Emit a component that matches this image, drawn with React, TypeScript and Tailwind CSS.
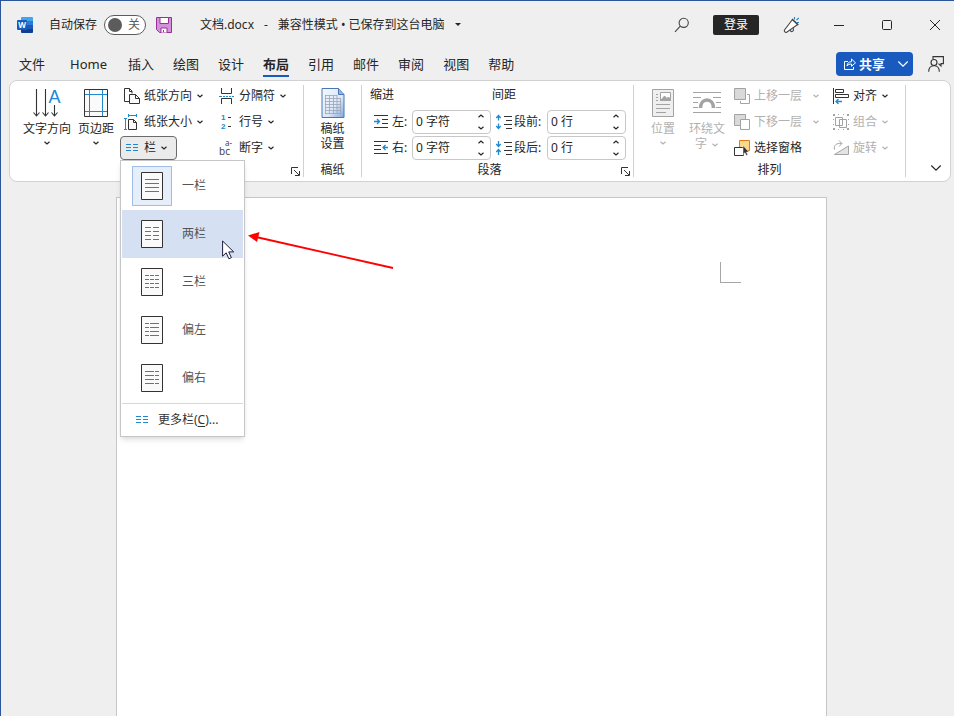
import React, { useState } from 'react';

interface IconProps {
  className?: string;
}

interface RibbonButtonProps {
  icon: React.ReactNode;
  label: string;
  disabled?: boolean;
  active?: boolean;
  arrow?: 'none' | 'near' | 'far';
}

interface SpinFieldProps {
  id: string;
  icon: React.ReactNode;
  label: string;
  labelClass: string;
  value: string;
}

const TABS = ['文件', 'Home', '插入', '绘图', '设计', '布局', '引用', '邮件', '审阅', '视图', '帮助'];

// text lines drawn inside each column preview
const COLUMN_PRESETS = [
  { name: '一栏', lines: 'M4 7.5h14M4 11.5h14M4 15.5h14M4 19.5h14' },
  { name: '两栏', lines: 'M4 7.5h6M12 7.5h6M4 11.5h6M12 11.5h6M4 15.5h6M12 15.5h6M4 19.5h6M12 19.5h6' },
  { name: '三栏', lines: 'M4 7.5h4M9 7.5h4M14 7.5h4M4 11.5h4M9 11.5h4M14 11.5h4M4 15.5h4M9 15.5h4M14 15.5h4M4 19.5h4M9 19.5h4M14 19.5h4' },
  { name: '偏左', lines: 'M4 7.5h4M9 7.5h9M4 11.5h4M9 11.5h9M4 15.5h4M9 15.5h9M4 19.5h4M9 19.5h9' },
  { name: '偏右', lines: 'M4 7.5h9M14 7.5h4M4 11.5h9M14 11.5h4M4 15.5h9M14 15.5h4M4 19.5h9M14 19.5h4' },
];

const ChevronSmall: React.FC<IconProps> = ({ className = '' }) => (
  <svg className={`h-2 w-2 shrink-0 ${className}`} viewBox="0 0 8 8" fill="none" stroke="currentColor" strokeWidth="1.2">
    <path d="M1.5 2.8L4 5l2.500-2.200" />
  </svg>
);

const ChevronWide: React.FC<IconProps> = ({ className = '' }) => (
  <svg className={`h-3 w-3 shrink-0 ${className}`} viewBox="0 0 12 12" fill="none" stroke="currentColor" strokeWidth="1.2">
    <path d="M1.300 3.5L6 8.200l4.700-4.700" />
  </svg>
);

const WordLogo = () => (
  <svg className="h-4 w-4" viewBox="0 0 16 16">
    <path d="M4 1a1 1 0 0 1 1-1h10a1 1 0 0 1 1 1v3.5H4z" fill="#41a5ee" />
    <path d="M4 4h12v4H4z" fill="#2b7cd3" />
    <path d="M4 8h12v4H4z" fill="#185abd" />
    <path d="M4 12h12v3a1 1 0 0 1-1 1H5a1 1 0 0 1-1-1z" fill="#103f91" />
    <rect y="3" width="10" height="10" rx="1" fill="#185abd" />
    <text x="5" y="11" textAnchor="middle" fontSize="8" fontWeight="700" fill="#fff">W</text>
  </svg>
);

const SaveIcon = () => (
  <svg className="h-4 w-4" viewBox="0 0 16 16" stroke="#98309c">
    <path d="M.5.5h15v15h-12l-3-3z" fill="#d490d8" />
    <path d="M4 .5h8.5v6H4zM5 15.5v-4.5h6v4.5" fill="#fff" />
    <path d="M7.5 13v2" />
  </svg>
);

const SearchIcon = () => (
  <svg className="h-4 w-4" viewBox="0 0 16 16" fill="none" stroke="#444" strokeWidth="1.1">
    <circle cx="10.7" cy="5.8" r="4.6" />
    <path d="M7.300 9.200L2 14.800" />
  </svg>
);

const PenIcon = () => (
  <svg className="h-4 w-4" viewBox="0 0 16 16" fill="none" stroke="#444" strokeWidth="1.1">
    <path d="M9.500 2.500L1.500 13c-.6 1.500.8 2.800 2.200 2.200L14.800 7.500z" fill="#fff" />
    <path d="M9 2l6.200 6M7.200 13.200c.3 1.600 2 1.800 2.800.8s.6-1.800.2-2.900" />
    <path d="M11.500 0v2.500M15.800.800L13.500 3.200M14 5.500h2" stroke="#1f86c9" />
  </svg>
);

const ShareIcon = () => (
  <svg className="h-3 w-3" viewBox="0 0 12 12" fill="none" stroke="#fff">
    <path d="M4 3.5H.5v8h9V9" />
    <path d="M3 8c.3-3 2-4.3 4.5-4.3V1l4 3.800-4 3.500V6C5.500 6 4 6.500 3 8z" />
  </svg>
);

const CommentsIcon = () => (
  <svg className="h-4 w-4" viewBox="0 0 16 16" fill="none" stroke="#333" strokeWidth="1.1">
    <path d="M5 3V.6h10.400v7H13V10l-2.500-2.400" />
    <circle cx="6" cy="6.5" r="3" />
    <path d="M.7 15.800c0-4 2.300-6 5.300-6s5.300 2 5.300 6" />
  </svg>
);

const TextDirectionIcon = () => (
  <svg className="h-[30px] w-7 overflow-visible" viewBox="0 0 28 30" fill="none" stroke="#333" strokeWidth="1.1">
    <path d="M3.500 1v27M.5 24.500l3 3.500 3-3.500M12.500 1v27M9.500 24.500l3 3.500 3-3.500M21.500 17v11M18.500 24.500l3 3.500 3-3.500" />
    <text x="21.5" y="15" textAnchor="middle" fontSize="18" fill="#2088cf" stroke="none" className="font-['Liberation_Sans']">
      A
    </text>
  </svg>
);

const MarginsIcon = () => (
  <svg className="h-[30px] w-6" viewBox="0 0 24 30" fill="none">
    <path d="M.5 1.500h23v27H.5z" fill="#fafafa" />
    <path d="M5.500 1.500v27M18.500 1.500v27M.5 6.500h23M.5 23.500h23" stroke="#2088cf" />
    <path d="M.5 1.500h23v27H.5z" stroke="#333" />
  </svg>
);

const OrientationIcon = () => (
  <svg className="h-4 w-4" viewBox="0 0 16 16" fill="none" stroke="#333">
    <path d="M5 13.500H.5V.5h5l2.500 2.500v2.500M5.500.5v3h2.500" />
    <path d="M5.500 6.500h6l4 4v5h-10z" fill="#fafafa" />
    <path d="M11.500 6.500v4h4" />
  </svg>
);

const PaperSizeIcon = () => (
  <svg className="h-4 w-4" viewBox="0 0 16 16" fill="none">
    <path d="M4.500 5.500h5l3 3v7h-8z" fill="#fafafa" stroke="#333" />
    <path d="M9.500 5.500v3h3" stroke="#333" />
    <path d="M4.500 1.500h8M4.500 0v3M12.500 0v3M1.500 4.500v11M0 4.500h3M0 15.500h3" stroke="#2088cf" />
  </svg>
);

const ColumnsIcon = () => (
  <svg className="h-4 w-4" viewBox="0 0 16 16" stroke="#2088cf">
    <path d="M2 4.500h5M9 4.500h5M2 7.500h5M9 7.500h5M2 10.500h5M9 10.500h5" />
  </svg>
);

const BreaksIcon = () => (
  <svg className="h-4 w-4" viewBox="0 0 16 16" fill="none" stroke="#333">
    <path d="M2.500 0v5.500h10V0M2.500 16v-5.500h10V16" />
    <path d="M0 8.500h3M4 8.500h2M7 8.500h2M10 8.500h2M13 8.500h2" stroke="#2088cf" />
  </svg>
);

const LineNumbersIcon = () => (
  <svg className="h-4 w-4 overflow-visible font-['Liberation_Sans']" viewBox="0 0 16 16" fontSize="8" fontWeight="700" fill="#2088cf">
    <text x="2" y="6">1</text>
    <text x="2" y="15">2</text>
    <path d="M9 3.500h3M9 12.500h3" stroke="#333" />
  </svg>
);

const HyphenIcon = () => (
  <svg className="h-4 w-4 overflow-visible" viewBox="0 0 16 16" fill="#444">
    <text x="0" y="15" fontSize="10">bc</text>
    <text x="6" y="6" fontSize="8">a-</text>
  </svg>
);

const DraftPaperIcon = () => (
  <svg className="h-[30px] w-6" viewBox="0 0 24 30" fill="none">
    <defs>
      <linearGradient id="draft" x1="0" y1="0" x2="1" y2="1">
        <stop offset="0" stopColor="#f4f8fd" />
        <stop offset="0.6" stopColor="#dce8f7" />
        <stop offset="1" stopColor="#7ea6dc" />
      </linearGradient>
    </defs>
    <path d="M1 .5h16.500l5.500 6v23H1z" fill="url(#draft)" stroke="#4a76b8" />
    <path d="M17.500.5v6H23" fill="#8db4e6" stroke="#4a76b8" />
    <path
      d="M4 7.500h12M4 10.500h16M4 13.500h16M4 16.500h16M4 19.500h16M4 22.500h16M4 25.500h16M4.500 7v19M8.500 7v19M12.500 7v19M16 7v19M19.500 10v16"
      stroke="#9aa5b8"
      strokeWidth="0.8"
    />
  </svg>
);

const IndentLeftIcon = () => (
  <svg className="h-4 w-4" viewBox="0 0 16 16" fill="none" stroke="#333">
    <path d="M0 1.500h14M8 5.500h6M8 9.500h6M0 13.500h14" />
    <path d="M0 7.500h5M3 5l2.500 2.500L3 10" stroke="#2088cf" strokeWidth="1.3" />
  </svg>
);

const IndentRightIcon = () => (
  <svg className="h-4 w-4" viewBox="0 0 16 16" fill="none" stroke="#333">
    <path d="M0 1.500h14M0 5.500h7M0 9.500h7M0 13.500h14" />
    <path d="M9 7.500h5M11.500 5L9 7.500l2.500 2.500" stroke="#2088cf" strokeWidth="1.3" />
  </svg>
);

const SpaceBeforeIcon = () => (
  <svg className="h-4 w-4" viewBox="0 0 16 16" fill="none" stroke="#333">
    <path d="M8 2.500h8M10 6.500h6M8 10.500h8M10 14.500h6" />
    <path d="M2.500 1.500v5M.3 4l2.200-2.500L4.700 4M2.500 9.500v5M.3 12l2.200 2.500L4.700 12" stroke="#2088cf" strokeWidth="1.3" />
  </svg>
);

const SpaceAfterIcon = () => (
  <svg className="h-4 w-4" viewBox="0 0 16 16" fill="none" stroke="#333">
    <path d="M8 2.500h8M10 6.500h6M8 10.500h8M10 14.500h6" />
    <path d="M2.500 1v5M.3 4l2.200 2.500L4.700 4M2.500 15v-5M.3 12l2.200-2.500L4.700 12" stroke="#2088cf" strokeWidth="1.3" />
  </svg>
);

const PositionIcon = () => (
  <svg className="h-[30px] w-6" viewBox="0 0 24 30" fill="none" stroke="#a3a3a3">
    <path d="M1.500 1.500h21v27h-21z" fill="#efefef" />
    <path d="M9.500 4.500h10v8h-10z" fill="#fff" />
    <path d="M10 12l3.500-4 2.500 2.500L17.500 9l2 2v1.500h-10z" fill="#a3a3a3" />
    <path d="M5 6.500h2M5 9.500h2M5 12.500h2M5 16.500h14M5 20.500h14M5 24.500h10" />
  </svg>
);

const WrapIcon = () => (
  <svg className="h-[30px] w-7" viewBox="0 0 28 30" fill="none" stroke="#a3a3a3">
    <path d="M0 4.500h28M0 9.500h8M20 9.500h8M0 14.500h5M23 14.500h5M0 19.500h5M23 19.500h5M0 24.500h28" />
    <path d="M7.500 20c0-5 3-8 6.500-8s6.500 3 6.500 8" strokeWidth="3.6" />
  </svg>
);

const BringForwardIcon = () => (
  <svg className="h-4 w-4" viewBox="0 0 16 16" fill="none" stroke="#a3a3a3">
    <path d="M13 6.500h2.500v9h-9V13" />
    <path d="M.5.5h11v11H.5z" fill="#d9d9d9" />
  </svg>
);

const SendBackwardIcon = () => (
  <svg className="h-4 w-4" viewBox="0 0 16 16" fill="none" stroke="#a3a3a3">
    <path d="M.5.5h11v11H.5z" fill="#d9d9d9" />
    <path d="M6.500 5.500h9v10h-9z" fill="#fff" />
  </svg>
);

const SelectionPaneIcon = () => (
  <svg className="h-4 w-4" viewBox="0 0 16 16" fill="none">
    <path d="M5.500.5h10v10h-10z" fill="#fbd98b" stroke="#e07b1a" />
    <path d="M.5 7.500h9v8h-9z" fill="#fff" stroke="#333" />
    <path d="M9 5.500v9l2-1.800 1.300 2.800 1.500-.7-1.300-2.700H15z" fill="#333" stroke="#fff" strokeWidth="0.5" />
  </svg>
);

const AlignIcon = () => (
  <svg className="h-4 w-4" viewBox="0 0 16 16" fill="none" stroke="#333">
    <path d="M.5 0v16M2.500 1.500h8v3h-8zM2.500 6.500h13v3h-13z" />
    <path d="M3 13.500h6M5.500 11L3 13.500 5.500 16" stroke="#2088cf" strokeWidth="1.3" />
  </svg>
);

const GroupIcon = () => (
  <svg className="h-4 w-4" viewBox="0 0 16 16" fill="none" stroke="#a3a3a3">
    <path d="M2.500 3.500h7v8h-7zM6.500 5.500h7v8h-7z" />
    <path d="M0 1h2M14 1h2M0 15h2M14 15h2" strokeWidth="2" />
    <path d="M5 .5h1M10 .5h1M5 15.500h1M10 15.500h1M0 5.500h1M0 10.500h1M15 5.500h1M15 10.500h1" />
  </svg>
);

const RotateIcon = () => (
  <svg className="h-4 w-4" viewBox="0 0 16 16" fill="none" stroke="#a3a3a3">
    <path d="M15.500 6v8.500H1.500z" fill="#e4e4e4" />
    <path d="M1.500 9.500C.5 5 3.500 3 8.500 3.500M6 .5l3 3-3 3" />
  </svg>
);

const LauncherIcon = () => (
  <svg className="h-[9px] w-[9px]" viewBox="0 0 9 9" fill="none" stroke="#333">
    <path d="M.5 7V.5H7M3 3l5 5M8.500 4v4.500H4" />
  </svg>
);

const PresetIcon: React.FC<{ lines: string }> = ({ lines }) => (
  <svg className="h-7 w-[22px]" viewBox="0 0 22 28">
    <path d="M.5.5h21v27H.5z" fill="#fafafa" stroke="#333" />
    <path d={lines} stroke="#2088cf" />
  </svg>
);

const RibbonButton: React.FC<RibbonButtonProps> = ({ icon, label, disabled, active, arrow = 'near' }) => (
  <button
    type="button"
    disabled={disabled}
    className={`flex h-6 items-center gap-1 self-start rounded border pl-[3px] pr-2 ${
      active ? 'border-[#6b6b6b] bg-[#ebebeb]' : 'border-transparent'
    } ${disabled ? 'text-[#b1b1b1]' : ''}`}
  >
    {icon}
    <span className="whitespace-nowrap">{label}</span>
    {arrow !== 'none' && <ChevronSmall className={arrow === 'far' ? 'ml-1.5' : ''} />}
  </button>
);

const SpinField: React.FC<SpinFieldProps> = ({ id, icon, label, labelClass, value }) => (
  <div className="flex h-6 items-center pl-1">
    {icon}
    <label htmlFor={id} className={`ml-0.5 shrink-0 whitespace-nowrap ${labelClass}`}>
      {label}
    </label>
    <div className="flex h-6 w-[79px] rounded border border-[#c8c8c8] bg-white">
      <input id={id} defaultValue={value} className="w-0 flex-1 bg-transparent pl-[3px] outline-none" />
      <div className="flex w-[18px] flex-col items-center justify-between py-px">
        <button type="button" aria-label={`${label} +`}>
          <ChevronSmall className="rotate-180" />
        </button>
        <button type="button" aria-label={`${label} -`}>
          <ChevronSmall />
        </button>
      </div>
    </div>
  </div>
);

const GroupFooter: React.FC<{ label?: string; launcher?: boolean }> = ({ label, launcher }) => (
  <div className="flex h-4 items-center">
    <span className="flex-1 text-center">{label}</span>
    {launcher && (
      <button type="button" aria-label={`${label ?? ''}设置`} className="flex h-4 w-4 items-end justify-center pb-0.5">
        <LauncherIcon />
      </button>
    )}
  </div>
);

const Separator = () => <div className="my-1 w-px shrink-0 bg-[#d1d1d1]" />;

const ColumnsMenu = () => (
  <div className="absolute left-0 top-6 z-10 w-[125px] border border-[#c6c6c6] bg-white p-px text-[#555] shadow-md">
    {COLUMN_PRESETS.map((preset, i) => (
      <button
        key={preset.name}
        type="button"
        className={`relative flex h-12 w-full items-center gap-2.5 pl-2.5 ${i === 1 ? 'bg-[#d5e0f2]' : ''}`}
      >
        <span
          className={`flex h-10 w-10 items-center justify-center border ${
            i === 0 ? 'border-[#a0bde5] bg-[#e6eefa]' : 'border-transparent'
          }`}
        >
          <PresetIcon lines={preset.lines} />
        </span>
        <span>{preset.name}</span>
        {i === 1 && (
          <svg className="absolute left-[100px] top-[30px] h-5 w-[13px]" viewBox="0 0 13 20">
            <path d="M.6 1v15.200l3.600-3.400 2.700 6 2.500-1.100-2.700-5.800h5z" fill="#fff" stroke="#1c1c3a" />
          </svg>
        )}
      </button>
    ))}
    <div className="mt-px border-t border-[#d8d8d8]" />
    <button type="button" className="flex h-[31px] w-full items-center gap-2 pl-3 text-[#333]">
      <ColumnsIcon />
      <span>
        更多栏(<u className="underline-offset-2">C</u>)...
      </span>
    </button>
  </div>
);

const Ribbon = () => (
  <section className="ml-2 mr-[3px] flex h-[102px] shrink-0 rounded-lg border border-[#d1d1d1] bg-white">
    <div className="flex shrink-0 flex-col pt-[3px]">
      <div className="flex h-[78px] pl-3 pr-[7px]">
        <button type="button" className="flex w-[50px] flex-col items-center pt-1">
          <TextDirectionIcon />
          <span className="mt-[3px] leading-[15px]">文字方向</span>
          <ChevronSmall className="mt-[3px]" />
        </button>
        <button type="button" className="flex w-12 flex-col items-center pt-1">
          <MarginsIcon />
          <span className="mt-[3px] leading-[15px]">页边距</span>
          <ChevronSmall className="mt-[3px]" />
        </button>
        <div className="flex flex-col gap-0.5">
          <RibbonButton icon={<OrientationIcon />} label="纸张方向" />
          <RibbonButton icon={<PaperSizeIcon />} label="纸张大小" />
          <div className="relative">
            <RibbonButton icon={<ColumnsIcon />} label="栏" active />
            <ColumnsMenu />
          </div>
        </div>
        <div className="ml-0.5 flex flex-col gap-0.5">
          <RibbonButton icon={<BreaksIcon />} label="分隔符" />
          <RibbonButton icon={<LineNumbersIcon />} label="行号" />
          <RibbonButton icon={<HyphenIcon />} label="断字" />
        </div>
      </div>
      <GroupFooter launcher />
    </div>
    <Separator />

    <div className="flex w-[57px] shrink-0 flex-col pt-[3px]">
      <div className="flex h-[78px] justify-center">
        <button type="button" className="flex w-6 flex-col items-center pt-1">
          <DraftPaperIcon />
          <span className="mt-[3px] leading-[15px]">稿纸设置</span>
        </button>
      </div>
      <GroupFooter label="稿纸" />
    </div>
    <Separator />

    <div className="flex shrink-0 flex-col pt-[3px]">
      <div className="flex h-[78px] gap-px pl-2 pr-[7px]">
        <div className="flex flex-col gap-0.5">
          <h3 className="h-6 leading-[22px]">缩进</h3>
          <SpinField id="indent-left" icon={<IndentLeftIcon />} label="左:" labelClass="w-5" value="0 字符" />
          <SpinField id="indent-right" icon={<IndentRightIcon />} label="右:" labelClass="w-5" value="0 字符" />
        </div>
        <div className="flex flex-col gap-0.5">
          <h3 className="h-6 leading-[22px]">间距</h3>
          <SpinField id="space-before" icon={<SpaceBeforeIcon />} label="段前:" labelClass="w-[33px]" value="0 行" />
          <SpinField id="space-after" icon={<SpaceAfterIcon />} label="段后:" labelClass="w-[33px]" value="0 行" />
        </div>
      </div>
      <GroupFooter label="段落" launcher />
    </div>
    <Separator />

    <div className="flex shrink-0 flex-col pt-[3px]">
      <div className="flex h-[78px] pl-1 pr-[7px]">
        <button type="button" disabled className="flex w-[50px] flex-col items-center pt-1 text-[#b1b1b1]">
          <PositionIcon />
          <span className="mt-[3px] leading-[15px]">位置</span>
          <ChevronSmall className="mt-[3px]" />
        </button>
        <button type="button" disabled className="flex w-[38px] flex-col items-center pt-1 text-[#b1b1b1]">
          <WrapIcon />
          <span className="mt-[3px] leading-[15px]">
            环绕文字
            <ChevronSmall className="ml-1 inline-block align-middle" />
          </span>
        </button>
        <div className="ml-1 flex flex-col gap-0.5">
          <RibbonButton icon={<BringForwardIcon />} label="上移一层" arrow="far" disabled />
          <RibbonButton icon={<SendBackwardIcon />} label="下移一层" arrow="far" disabled />
          <RibbonButton icon={<SelectionPaneIcon />} label="选择窗格" arrow="none" />
        </div>
        <div className="flex flex-col gap-0.5">
          <RibbonButton icon={<AlignIcon />} label="对齐" />
          <RibbonButton icon={<GroupIcon />} label="组合" disabled />
          <RibbonButton icon={<RotateIcon />} label="旋转" disabled />
        </div>
      </div>
      <GroupFooter label="排列" />
    </div>
    <Separator />

    <button type="button" aria-label="折叠功能区" className="mb-[7px] ml-auto mr-2 self-end">
      <ChevronWide />
    </button>
  </section>
);

export default function App() {
  const [tab, setTab] = useState('布局');

  return (
    <div className="flex min-h-screen flex-col border-l border-t border-[#2b579a] bg-[#efefef] font-['Noto_Sans','Noto_Sans_CJK_SC',sans-serif] text-xs text-[#262626]">
      <header className="flex h-[47px] shrink-0 items-center pl-4 pr-px">
        <WordLogo />
        <label htmlFor="autosave" className="ml-4 whitespace-nowrap">
          自动保存
        </label>
        <div className="ml-[7px] flex h-5 w-[42px] shrink-0 items-center justify-between rounded-full border border-[#5c5c5c] bg-white pl-[3px] pr-[5px]">
          <input id="autosave" type="checkbox" className="h-3.5 w-3.5 appearance-none rounded-full bg-[#5c5c5c]" />
          <span className="text-[#5c5c5c]">关</span>
        </div>
        <button type="button" aria-label="保存" className="ml-2.5">
          <SaveIcon />
        </button>
        <button type="button" className="ml-7 flex items-center gap-2.5 whitespace-nowrap">
          <span>文档.docx</span>
          <span>-</span>
          <span>兼容性模式 • 已保存到这台电脑</span>
          <svg className="h-[3px] w-[6px]" viewBox="0 0 6 3">
            <path d="M0 0h6L3 3z" fill="#262626" />
          </svg>
        </button>

        <div className="ml-auto flex items-center gap-6">
          <button type="button" aria-label="搜索">
            <SearchIcon />
          </button>
          <button type="button" className="h-5 w-[46px] rounded-xs bg-[#262626] text-white">
            登录
          </button>
          <button type="button" aria-label="墨迹">
            <PenIcon />
          </button>
        </div>
        <div className="ml-[22px] flex gap-3">
          <button type="button" aria-label="最小化" className="flex h-9 w-9 items-center justify-center">
            <svg className="h-3 w-3" viewBox="0 0 12 12" stroke="#262626">
              <path d="M1 6.500h10" />
            </svg>
          </button>
          <button type="button" aria-label="最大化" className="flex h-9 w-9 items-center justify-center">
            <svg className="h-3 w-3" viewBox="0 0 12 12" fill="none" stroke="#262626">
              <rect x="1.5" y="1.5" width="9" height="9" rx="1" />
            </svg>
          </button>
          <button type="button" aria-label="关闭" className="flex h-9 w-9 items-center justify-center">
            <svg className="h-3 w-3" viewBox="0 0 12 12" stroke="#262626">
              <path d="M1 1l10 10M11 1L1 11" />
            </svg>
          </button>
        </div>
      </header>

      <nav className="flex h-8 shrink-0 items-center pl-[18px] pr-2.5 text-[13px]">
        <div className="flex gap-[19px]">
          {TABS.map((name) => (
            <button
              key={name}
              type="button"
              onClick={() => setTab(name)}
              className={`h-[26px] whitespace-nowrap border-b-2 pt-0.5 leading-[22px] ${
                name === 'Home' ? 'pl-1.5 pr-0.5' : ''
              } ${name === tab ? 'border-[#185abd] font-bold' : 'border-transparent'}`}
            >
              {name}
            </button>
          ))}
        </div>
        <button
          type="button"
          className="ml-auto flex h-6 w-[77px] items-center rounded bg-[#185abd] pl-2 font-bold text-white"
        >
          <ShareIcon />
          <span className="ml-[3px] leading-5">共享</span>
          <ChevronWide className="ml-auto mr-1" />
        </button>
        <button type="button" aria-label="批注" className="ml-[15px]">
          <CommentsIcon />
        </button>
      </nav>

      <Ribbon />

      <main className="flex flex-1 pl-[115px] pr-[127px] pt-[15px]">
        <article className="relative flex flex-1 items-start justify-end border-x border-t border-[#c6c6c6] bg-white pr-[85px] pt-16">
          <div className="h-[21px] w-[21px] border-b border-l border-[#a6a6a6]" />
          <svg className="absolute left-[131px] top-[31px] h-10 w-[147px]" viewBox="0 0 147 40" fill="#f00">
            <path d="M8 8l137 31" stroke="#f00" strokeWidth="1.8" />
            <path d="M0 6.500L11.500 3 9 13z" />
          </svg>
        </article>
      </main>
    </div>
  );
}
